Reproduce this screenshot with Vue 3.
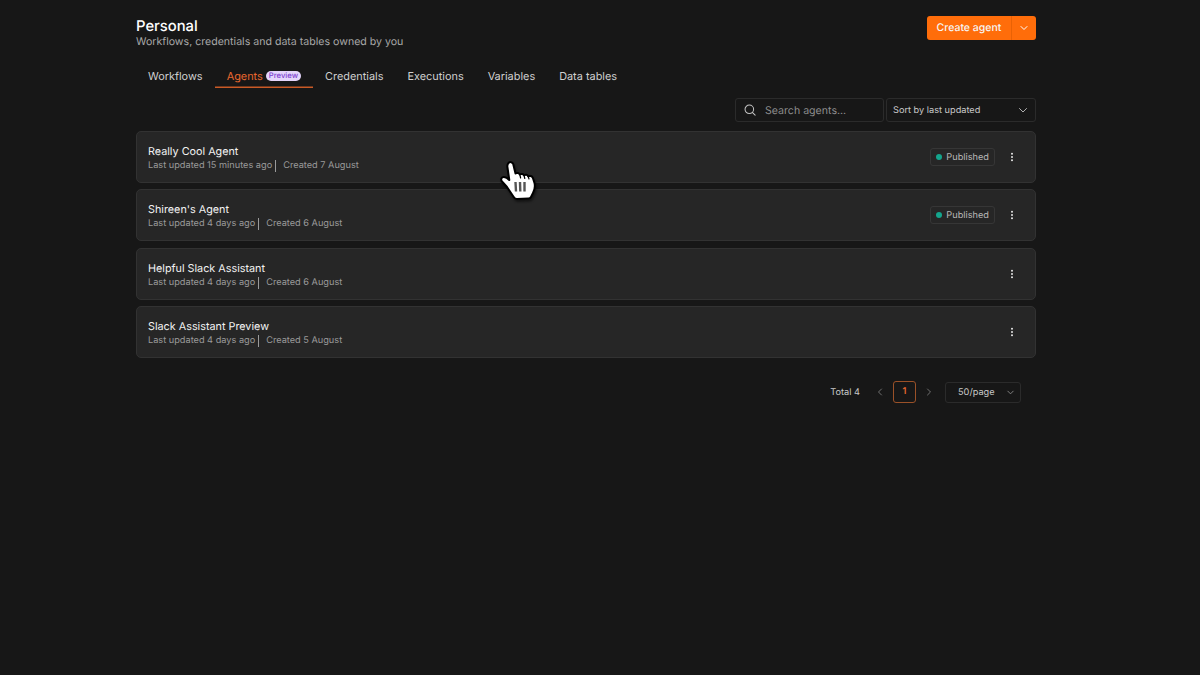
<template>
  <div class="page">
    <header class="head">
      <div>
        <h1 class="title">Personal</h1>
        <p class="subtitle">Workflows, credentials and data tables owned by you</p>
      </div>
      <div class="create">
        <button class="create-main">Create agent</button>
        <button class="create-more">
          <svg width="10" height="10" viewBox="0 0 10 10"><path d="M2 3.5 5 6.5 8 3.5" fill="none" stroke="#fff" stroke-width="1" stroke-linecap="round" stroke-linejoin="round" /></svg>
        </button>
      </div>
    </header>

    <nav class="tabs">
      <a v-for="tab in tabs" :key="tab" class="tab" :class="{ active: tab === 'Agents' }">
        {{ tab }}
        <span v-if="tab === 'Agents'" class="preview">Preview</span>
      </a>
    </nav>

    <div class="filters">
      <div class="search">
        <svg width="12" height="12" viewBox="0 0 14 14" fill="none" stroke="#c4c4c4" stroke-width="1.2" stroke-linecap="round"><circle cx="6.2" cy="6.2" r="5" /><path d="M10 10 13 13" /></svg>
        <span>Search agents...</span>
      </div>
      <div class="sort">
        <span>Sort by last updated</span>
        <svg width="10" height="10" viewBox="0 0 10 10"><path d="M1.5 3.5 5 7 8.5 3.5" fill="none" stroke="#b0b0b0" stroke-width="1" stroke-linecap="round" stroke-linejoin="round" /></svg>
      </div>
    </div>

    <div class="list">
      <div v-for="agent in agents" :key="agent.name" class="card">
        <div class="info">
          <div class="name">{{ agent.name }}</div>
          <div class="meta">
            <span class="updated">Last updated {{ agent.updated }}</span>
            <span>Created {{ agent.created }}</span>
          </div>
        </div>
        <div class="actions">
          <span v-if="agent.published" class="badge"><i class="dot"></i>Published</span>
          <svg width="12" height="12" viewBox="0 0 12 12" fill="#e6e6e6"><circle cx="6" cy="2.8" r="1" /><circle cx="6" cy="6" r="1" /><circle cx="6" cy="9.2" r="1" /></svg>
        </div>
      </div>
    </div>

    <div class="pager">
      <span class="total">Total 4</span>
      <svg class="arrow" width="10" height="10" viewBox="0 0 10 10"><path d="M6.5 2 3.5 5 6.5 8" fill="none" stroke="#707070" stroke-width="1" stroke-linecap="round" stroke-linejoin="round" /></svg>
      <span class="current">1</span>
      <svg class="arrow" width="10" height="10" viewBox="0 0 10 10"><path d="M3.5 2 6.5 5 3.5 8" fill="none" stroke="#707070" stroke-width="1" stroke-linecap="round" stroke-linejoin="round" /></svg>
      <div class="size">
        <span>50/page</span>
        <svg width="9" height="9" viewBox="0 0 10 10"><path d="M2 3.5 5 6.5 8 3.5" fill="none" stroke="#8a8a8a" stroke-width="1" stroke-linecap="round" stroke-linejoin="round" /></svg>
      </div>
    </div>

    <!-- mouse pointer from the recording -->
    <svg class="pointer" width="60" height="60" viewBox="0 0 60 60">
      <path d="M18.5 13C20 11.5 22.5 12 23.2 14L25.5 23.5C27 22.5 29 23 29.8 24.5 31 23.5 33.2 23.8 34 25.3 35.5 24.3 37.5 24.7 38.2 26.3 39.8 25.5 42 26 42.8 27.8L44.5 33C45.5 37 44.5 40 43 43L41 47C40.5 48 39.5 48.5 38.5 48.5L27 49C25.5 49 24.5 48.3 23.7 47L17 37 12 31.5C10.5 29.5 11.2 27.2 13.5 27 15.5 26.8 17.5 28 19.3 30L17.4 17C17.2 15.5 17.5 14 18.5 13Z" fill="#fff" stroke="#000" stroke-width="2" stroke-linejoin="round" />
      <path d="M25.5 32 26 41.5M30 32 30.3 41.5M34.5 32 34.5 41.5" fill="none" stroke="#555" stroke-width="2.4" />
      <path d="M29.8 24.5 30.6 28M34 25.3 34.8 28.5M38.2 26.3 39 29" fill="none" stroke="#000" stroke-width="1.2" stroke-linecap="round" />
    </svg>
  </div>
</template>

<script setup>
const tabs = ['Workflows', 'Agents', 'Credentials', 'Executions', 'Variables', 'Data tables']

const agents = [
  { name: 'Really Cool Agent', updated: '15 minutes ago', created: '7 August', published: true },
  { name: "Shireen's Agent", updated: '4 days ago', created: '6 August', published: true },
  { name: 'Helpful Slack Assistant', updated: '4 days ago', created: '6 August', published: false },
  { name: 'Slack Assistant Preview', updated: '4 days ago', created: '5 August', published: false },
]
</script>

<style>
html,
body {
  background: #171717;
}
</style>

<style scoped>
.page {
  position: relative;
  box-sizing: border-box;
  width: 900px;
  height: 675px;
  margin-left: 136px;
  padding-top: 16px;
  font-family: Inter, "Liberation Sans", sans-serif;
  text-rendering: geometricPrecision;
  color: #c8c8c8;
}

.head {
  display: flex;
  justify-content: space-between;
  align-items: flex-start;
}

.title {
  margin: 0;
  font-size: 14.8px;
  line-height: 20px;
  font-weight: 500;
  color: #fff;
}

.subtitle {
  margin: -1px 0 0;
  font-size: 10.6px;
  line-height: 14px;
  color: #a8a8a8;
}

.create {
  display: flex;
  height: 24px;
}

.create button {
  border: 0;
  background: #ff6d0a;
  color: #f6f6f6;
  font: 500 10.5px/24px Inter, "Liberation Sans", sans-serif;
  text-rendering: geometricPrecision;
  padding: 0;
  height: 24px;
}

.create-main {
  width: 84px;
  border-radius: 3px 0 0 3px;
}

.create-more {
  display: flex;
  align-items: center;
  justify-content: center;
  width: 25px;
  border-left: 1px solid #e96205 !important;
  border-radius: 0 3px 3px 0;
}

.tabs {
  display: flex;
  margin-top: 14px;
}

.tab {
  display: flex;
  align-items: center;
  gap: 3px;
  height: 25px;
  padding: 0 12px;
  font-size: 10.9px;
  color: #d0d0d0;
}

.tab.active {
  color: #e8672f;
  box-shadow: inset 0 -1.5px 0 #c95a26;
}

.preview {
  padding: 0 3px;
  border-radius: 6px;
  background: #e4d5fb;
  color: #7d3fd0;
  font-size: 7.7px;
  font-weight: 500;
  line-height: 10px;
}

.filters {
  display: flex;
  justify-content: flex-end;
  gap: 2px;
  margin-top: 10px;
}

.search,
.sort {
  box-sizing: border-box;
  display: flex;
  align-items: center;
  height: 24px;
  border: 1px solid #2b2b2b;
  border-radius: 3px;
}

.search {
  width: 149px;
  gap: 9px;
  padding-left: 8px;
  font-size: 10.6px;
  color: #8e8e8e;
}

.sort {
  width: 150px;
  justify-content: space-between;
  padding: 0 7px 0 6px;
  font-size: 9.2px;
  color: #c8c8c8;
}

.list {
  display: flex;
  flex-direction: column;
  gap: 6.33px;
  margin-top: 9px;
}

.card {
  box-sizing: border-box;
  display: flex;
  justify-content: space-between;
  align-items: center;
  height: 52px;
  padding: 0 17px 0 11px;
  background: #262626;
  border: 1px solid #323232;
  border-radius: 5px;
}

.info {
  padding-top: 3px;
}

.name {
  margin-bottom: 1px;
  font-size: 10.8px;
  line-height: 14px;
  color: #f2f2f2;
}

.meta {
  display: flex;
  font-size: 9.2px;
  line-height: 12px;
  color: #9a9a9a;
}

.updated {
  margin-right: 7px;
  padding-right: 3px;
  border-right: 1px solid #9a9a9a;
}

.actions {
  display: flex;
  align-items: center;
  gap: 11px;
}

.badge {
  box-sizing: border-box;
  display: flex;
  align-items: center;
  gap: 4px;
  height: 18px;
  padding: 0 5px;
  border: 1px solid #363636;
  border-radius: 3px;
  font-size: 9.2px;
  color: #b8b8b8;
}

.dot {
  width: 6px;
  height: 6px;
  border-radius: 50%;
  background: #14a58d;
}

.pager {
  display: flex;
  align-items: center;
  justify-content: flex-end;
  margin-top: 23.5px;
  padding-right: 15px;
  font-size: 9.2px;
}

.total {
  margin-right: 15px;
}

.current {
  box-sizing: border-box;
  width: 23px;
  height: 22px;
  margin: 0 8px;
  border: 1px solid #9a5128;
  border-radius: 3px;
  color: #e8672f;
  font-weight: 600;
  text-align: center;
  line-height: 20px;
}

.size {
  box-sizing: border-box;
  display: flex;
  align-items: center;
  justify-content: space-between;
  width: 76px;
  height: 21px;
  margin-left: 11px;
  padding: 0 5px 0 12px;
  border: 1px solid #2b2b2b;
  border-radius: 3px;
}

.pointer {
  position: absolute;
  left: 354px;
  top: 150px;
  filter: drop-shadow(1px 2px 1px rgba(0, 0, 0, 0.5));
}
</style>
